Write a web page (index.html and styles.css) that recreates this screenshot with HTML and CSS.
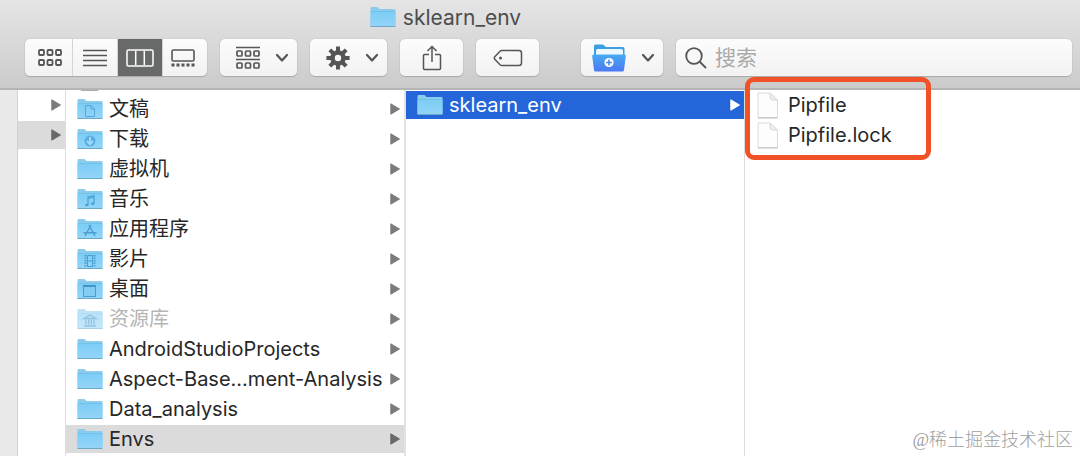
FILE: index.html
```html
<!DOCTYPE html>
<html lang="zh-CN">
<head>
<meta charset="utf-8">
<meta name="viewport" content="width=device-width, initial-scale=1">
<title>sklearn_env</title>
<link rel="stylesheet" href="styles.css">
</head>
<body>
<svg class="defs" aria-hidden="true">
  <defs>
    <linearGradient id="blue" x1="0" y1="0" x2="0" y2="1"><stop offset="0" stop-color="#7ccdf6"/><stop offset="1" stop-color="#94d4f8"/></linearGradient>
    <linearGradient id="vivid" x1="0" y1="0" x2="0" y2="1"><stop offset="0" stop-color="#48aaf2"/><stop offset="1" stop-color="#4b78f5"/></linearGradient>
    <symbol id="folder" viewBox="0 0 26 22">
      <path d="M.5 20V2Q.5 1 1.500 1H7Q8 1 8.500 2L9.500 3H24.500Q25.500 3 25.500 4V20Z" fill="#8bcbec"/>
      <path d="M.5 5.500H25.500V19.500Q25.500 20.500 24.500 20.500H1.500Q.5 20.500 .5 19.500Z" fill="url(#blue)"/>
      <path d="M1 5.500H25" stroke="#68bce9" stroke-width=".7"/>
      <path d="M.5 20.500H25.500" stroke="#69a9cb"/>
    </symbol>
    <symbol id="file" viewBox="0 0 22 27">
      <path d="M1 1H13L20.500 8.500V25.500H1Z" fill="#fdfdfd" stroke="#dadada"/>
      <path d="M13 1V5Q13 8 16 8H20.500Z" fill="#f1f1f1" stroke="#d4d4d4"/>
      <path d="M1 26H20.500" stroke="#bdbdbd"/>
    </symbol>
    <symbol id="arrow" viewBox="0 0 10 12"><path d="M.8.8V11.200L9.500 6Z" fill="currentColor" stroke="currentColor" stroke-linejoin="round"/></symbol>
    <symbol id="chevron" viewBox="0 0 14 10"><path d="M2 2L7 7.500L12 2" fill="none" stroke="currentColor" stroke-width="2.200" stroke-linecap="round" stroke-linejoin="round"/></symbol>
  </defs>
</svg>
<div class="window">
  <header class="header">
    <h1 class="title"><svg class="folder"><use href="#folder"/></svg>sklearn_env</h1>
    <div class="toolbar">
      <div class="control segments" role="group" aria-label="显示">
        <button class="segment" aria-label="图标"><svg width="24" height="18" viewBox="0 0 24 18" fill="none" stroke="currentColor" stroke-width="1.800"><rect x="1" y="1" width="5" height="5" rx="1"/><rect x="9.500" y="1" width="5" height="5" rx="1"/><rect x="18" y="1" width="5" height="5" rx="1"/><rect x="1" y="11" width="5" height="5" rx="1"/><rect x="9.500" y="11" width="5" height="5" rx="1"/><rect x="18" y="11" width="5" height="5" rx="1"/></svg></button>
        <button class="segment" aria-label="列表"><svg width="24" height="18" viewBox="0 0 24 18" stroke="currentColor" stroke-width="1.500"><path d="M0 1.500H24M0 6.500H24M0 11.500H24M0 16.500H24"/></svg></button>
        <button class="segment active" aria-label="分栏" aria-pressed="true"><svg width="28" height="18" viewBox="0 0 28 18" fill="none" stroke="currentColor" stroke-width="1.500"><rect x="1" y="1" width="26" height="16" rx="1.500"/><path d="M9.700 2V16M18.300 2V16"/></svg></button>
        <button class="segment" aria-label="画廊"><svg width="24" height="18" viewBox="0 0 24 18" fill="none" stroke="currentColor"><rect x="1" y="1" width="22" height="11" rx="1.500" stroke-width="1.600"/><path d="M.5 16H24" stroke-width="3" stroke-dasharray="3 2"/></svg></button>
      </div>
      <button class="control menu" aria-label="排列"><svg width="24" height="24" viewBox="0 0 24 24" fill="none" stroke="currentColor" stroke-width="1.700"><path d="M0 1.500H24M0 13.500H24" stroke-width="1.500"/><rect x="1" y="5" width="5" height="5" rx="1"/><rect x="9.500" y="5" width="5" height="5" rx="1"/><rect x="18" y="5" width="5" height="5" rx="1"/><rect x="1" y="17" width="5" height="5" rx="1"/><rect x="9.500" y="17" width="5" height="5" rx="1"/><rect x="18" y="17" width="5" height="5" rx="1"/></svg><svg class="chevron"><use href="#chevron"/></svg></button>
      <button class="control menu" aria-label="操作"><svg width="24" height="24" viewBox="-12 -12 24 24" stroke="currentColor"><circle r="5.500" fill="none" stroke-width="4.600"/><path d="M0-7V-11.600M0 7V11.600M-7 0H-11.600M7 0H11.600M5-5L8.200-8.200M-5 5L-8.200 8.200M5 5L8.200 8.200M-5-5L-8.200-8.200" stroke-width="4"/></svg><svg class="chevron"><use href="#chevron"/></svg></button>
      <button class="control single" aria-label="共享"><svg width="20" height="26" viewBox="0 0 20 26" fill="none" stroke="currentColor" stroke-width="1.500"><path d="M7 9.500H2.500Q1.500 9.500 1.500 10.500V23.500Q1.500 24.500 2.500 24.500H17.500Q18.500 24.500 18.500 23.500V10.500Q18.500 9.500 17.500 9.500H13M10 17V1.500M5.500 6L10 1.500L14.500 6"/></svg></button>
      <button class="control single" aria-label="标签"><svg width="30" height="18" viewBox="0 0 30 18" fill="none" stroke="currentColor" stroke-width="1.500"><path d="M9 1.500H26Q28.500 1.500 28.500 4V14Q28.500 16.500 26 16.500H9Q7.800 16.500 7 15.700L1.800 10.200Q.8 9 1.800 7.800L7 2.300Q7.800 1.500 9 1.500Z"/><circle cx="7.500" cy="9" r="1.500" fill="currentColor" stroke="none"/></svg></button>
      <button class="control menu wide" aria-label="新建"><svg width="34" height="28" viewBox="0 0 34 28"><path d="M2 26V2Q2 .5 3.500.5H11L14 3H31Q32.500 3 32.500 4.500V14H2Z" fill="#3c9fe4"/><path d="M4 12V7Q4 5 6 5H29Q31 5 31 7V12Z" fill="#edf8ff"/><path d="M.2 12Q0 10.500 1.500 10.500H32.500Q34 10.500 33.800 12L32 26Q31.800 27.500 30.500 27.500H3.500Q2.200 27.500 2 26Z" fill="url(#vivid)"/><circle cx="17" cy="18.500" r="4.600" fill="#fff"/><path d="M17 15.500V21.500M14 18.500H20" stroke="#4b8cf4" stroke-width="1.600"/></svg><svg class="chevron"><use href="#chevron"/></svg></button>
      <label class="control search"><svg width="22" height="22" viewBox="0 0 22 22" fill="none" stroke="currentColor" stroke-width="1.800"><circle cx="9" cy="9" r="7.800"/><path d="M14.500 14.500L21 21"/></svg><input class="search-input" type="search" placeholder="搜索" aria-label="搜索"></label>
    </div>
  </header>
  <main class="browser">
    <div class="sidebar"></div>
    <ul class="column parent">
      <li><button class="row" aria-label="1"><svg class="arrow"><use href="#arrow"/></svg></button></li>
      <li><button class="row current" aria-label="2"><svg class="arrow"><use href="#arrow"/></svg></button></li>
    </ul>
    <ul class="column home">
      <li><button class="row" aria-label="文件"><svg class="folder clipped" viewBox="0 0 26 22"><rect x="3" y="1" width="19" height="21.500" rx="2" fill="#fff" stroke="#aaa"/></svg></button></li>
      <li><button class="row"><svg class="folder" viewBox="0 0 26 22"><use href="#folder"/><path d="M8.500 7.500H14L17.500 11V18.500H8.500ZM14 7.500V11H17.500" fill="none" stroke="#54a7d7"/></svg><span class="name">文稿</span><svg class="arrow"><use href="#arrow"/></svg></button></li>
      <li><button class="row"><svg class="folder" viewBox="0 0 26 22"><use href="#folder"/><circle cx="13" cy="13" r="5.500" fill="#57aee0"/><path d="M13 9V16M10 13L13 16.300L16 13" fill="none" stroke="#9edaf9" stroke-width="2"/></svg><span class="name">下载</span><svg class="arrow"><use href="#arrow"/></svg></button></li>
      <li><button class="row"><svg class="folder"><use href="#folder"/></svg><span class="name">虚拟机</span><svg class="arrow"><use href="#arrow"/></svg></button></li>
      <li><button class="row"><svg class="folder" viewBox="0 0 26 22"><use href="#folder"/><path d="M11 17V9L17 7.500V15.500M11 10.500L17 9" fill="none" stroke="#499fd2" stroke-width="1.200"/><ellipse cx="9.700" cy="17" rx="1.700" ry="1.300" fill="#499fd2"/><ellipse cx="15.700" cy="15.800" rx="1.700" ry="1.300" fill="#499fd2"/></svg><span class="name">音乐</span><svg class="arrow"><use href="#arrow"/></svg></button></li>
      <li><button class="row"><svg class="folder" viewBox="0 0 26 22"><use href="#folder"/><path d="M14 7L8 18M12 7L18 18M6.500 14.800H19.500" fill="none" stroke="#499fd2" stroke-width="1.500"/></svg><span class="name">应用程序</span><svg class="arrow"><use href="#arrow"/></svg></button></li>
      <li><button class="row"><svg class="folder" viewBox="0 0 26 22"><use href="#folder"/><path d="M10.500 7.500H15.500V18.500H10.500ZM10.500 13H15.500" fill="none" stroke="#499fd2"/><path d="M8.500 7V19M17.500 7V19" stroke="#499fd2" stroke-width="2" stroke-dasharray="1.500 1"/></svg><span class="name">影片</span><svg class="arrow"><use href="#arrow"/></svg></button></li>
      <li><button class="row"><svg class="folder" viewBox="0 0 26 22"><use href="#folder"/><rect x="6.500" y="7.500" width="12" height="11" fill="#83cdf5" stroke="#499fd2"/><path d="M6.500 8H18.500" stroke="#3f94c8" stroke-width="2"/></svg><span class="name">桌面</span><svg class="arrow"><use href="#arrow"/></svg></button></li>
      <li><button class="row"><svg class="folder faded" viewBox="0 0 26 22"><use href="#folder"/><path d="M7 10.500L13 7L19 10.500ZM9 11.500V16.500M11.700 11.500V16.500M14.300 11.500V16.500M17 11.500V16.500M7 18H19" fill="none" stroke="#3b91c5" stroke-width="1.300"/></svg><span class="name muted">资源库</span><svg class="arrow"><use href="#arrow"/></svg></button></li>
      <li><button class="row"><svg class="folder"><use href="#folder"/></svg><span class="name">AndroidStudioProjects</span><svg class="arrow"><use href="#arrow"/></svg></button></li>
      <li><button class="row"><svg class="folder"><use href="#folder"/></svg><span class="name">Aspect-Base...ment-Analysis</span><svg class="arrow"><use href="#arrow"/></svg></button></li>
      <li><button class="row"><svg class="folder"><use href="#folder"/></svg><span class="name">Data_analysis</span><svg class="arrow"><use href="#arrow"/></svg></button></li>
      <li><button class="row current"><svg class="folder"><use href="#folder"/></svg><span class="name">Envs</span><svg class="arrow"><use href="#arrow"/></svg></button></li>
    </ul>
    <ul class="column envs">
      <li><button class="row selected"><svg class="folder"><use href="#folder"/></svg><span class="name">sklearn_env</span><svg class="arrow"><use href="#arrow"/></svg></button></li>
    </ul>
    <div class="files-pane">
      <ul class="column files">
        <li><button class="row"><svg class="file"><use href="#file"/></svg><span class="name">Pipfile</span></button></li>
        <li><button class="row"><svg class="file"><use href="#file"/></svg><span class="name">Pipfile.lock</span></button></li>
      </ul>
      <div class="highlight"></div>
      <p class="watermark">@稀土掘金技术社区</p>
    </div>
  </main>
</div>
</body>
</html>
```
FILE: styles.css
```css
* { box-sizing: border-box; }

body {
  margin: 0;
  background: #fff;
  color: #272727;
  font-family: Inter, "Noto Sans CJK SC", sans-serif;
  font-size: 20px;
}

button, input { font: inherit; color: inherit; }
svg { flex: none; display: block; }
.defs { position: absolute; width: 0; height: 0; }

.window {
  display: flex;
  flex-direction: column;
  height: 100vh;
  overflow: hidden;
}

.header {
  flex: none;
  padding: 3px 8px 12px 25px;
  background: linear-gradient(#e5e5e5, #cbcbcb);
  border-bottom: 2px solid #b5b5b5;
}

.title {
  display: flex;
  align-items: center;
  justify-content: center;
  gap: 7px;
  margin: 0 206px 8px 0;
  height: 28px;
  font-size: 21px;
  font-weight: 400;
  color: #4d4d4d;
}

.folder { width: 26px; height: 22px; }
.clipped { overflow: visible; }
.faded { opacity: 0.55; }
.file { width: 22px; height: 27px; }
.arrow { width: 10px; height: 12px; margin-left: auto; color: #7c7c7c; }
.chevron { width: 14px; height: 10px; }

.toolbar { display: flex; gap: 13px; }

.control {
  flex: none;
  display: flex;
  align-items: center;
  height: 37px;
  padding: 0;
  border: 0;
  border-radius: 5px;
  background: linear-gradient(#fcfcfc, #f2f2f2);
  box-shadow: 0 0 1px #999, 0 1px 1px #aaa;
  color: #555;
}

.segments { width: 182px; }

.segment {
  flex: 1;
  display: flex;
  align-items: center;
  justify-content: center;
  height: 100%;
  padding: 0;
  border: 0;
  background: none;
}

.segment:first-child { flex: none; width: 47px; padding-left: 2px; }
.segment + .segment { border-left: 1px solid #d4d4d4; }
.segment.active { background: #686a69; color: #fff; }
.segment.active + .segment { justify-content: flex-start; padding-left: 8px; flex: none; width: 45px; }

.menu {
  justify-content: space-between;
  width: 77px;
  padding: 0 8px 0 16px;
}

.wide { width: 82px; margin-left: 29px; padding-left: 11px; }
.single { justify-content: center; width: 63px; }

.search {
  flex: 1;
  min-width: 0;
  gap: 8px;
  padding: 0 9px;
}

.search-input {
  flex: 1;
  min-width: 0;
  padding: 0;
  border: 0;
  outline: 0;
  background: none;
  font-size: 21px;
}

.search-input::placeholder { color: #a9a9a9; opacity: 1; }

.browser { flex: 1; display: flex; min-height: 0; }
.sidebar { flex: none; width: 18px; background: #e9e9e9; border-right: 1px solid #d2d2d2; }

.column {
  flex: none;
  display: flex;
  flex-direction: column;
  gap: 2px;
  margin: 0;
  padding: 1px 0 0;
  list-style: none;
  overflow: hidden;
}

.parent { width: 48px; border-right: 1px solid #dcdcdc; }
.home { width: 340px; border-right: 2px solid #e3e3e3; }
.home li:first-child { margin-top: -26px; }
.envs { width: 339px; border-right: 1px solid #dcdcdc; }

.row {
  display: flex;
  align-items: center;
  gap: 6px;
  width: 100%;
  height: 28px;
  padding: 0 4px 0 11px;
  border: 0;
  background: none;
  text-align: left;
  line-height: 28px;
  white-space: nowrap;
}

.files .row { padding-left: 12px; gap: 9px; }
.muted { color: #b5b5b5; }
.current { background: #dbdbdb; }
.current .arrow { color: #696969; }
.selected { background: #2466d9; color: #fff; }
.selected .arrow { color: #fff; }

.files-pane { flex: 1; min-width: 0; position: relative; }

.highlight {
  position: absolute;
  top: -13px;
  left: 0;
  width: 186px;
  height: 83px;
  border: 5px solid #f05126;
  border-radius: 9px;
}

.watermark {
  position: absolute;
  right: 7px;
  bottom: 4px;
  margin: 0;
  font-family: "Liberation Serif", "Noto Sans CJK SC", serif;
  font-size: 18px;
  font-weight: 300;
  line-height: 24px;
  color: #a0a0a0;
}
```
